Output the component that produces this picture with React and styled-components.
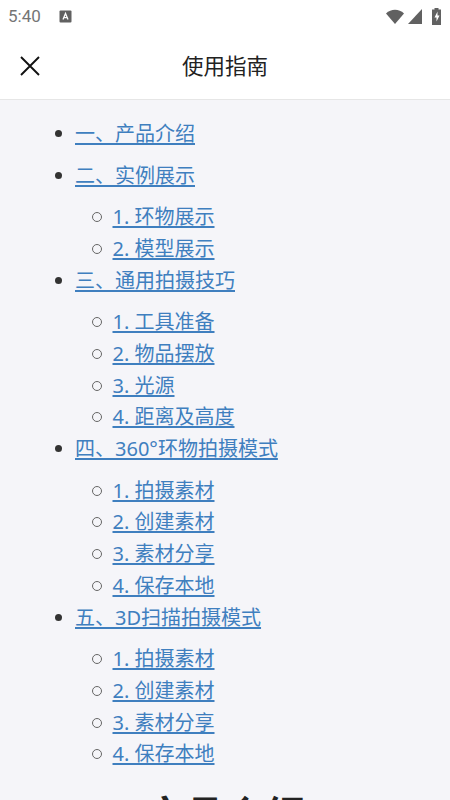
import { createGlobalStyle, styled } from "styled-components"

const GlobalStyle = createGlobalStyle`
    html, body {
        margin: 0;
        padding: 0;
        height: 100%;
        overflow: hidden;
    }

    body {
        font-family: "Noto Sans", "Open Sans", "Noto Sans CJK SC", sans-serif;
        background-color: #f5f5f9;
    }

    * {
        box-sizing: border-box;
    }
`;

const Page = styled.div`
    width: 450px;
    height: 800px;
    overflow: hidden;
    display: flex;
    flex-direction: column;
`;

const StatusBar = styled.div`
    height: 32px;
    background-color: white;
    display: flex;
    align-items: center;
    padding: 0 9px 0 8px;
    color: #757575;
`;

const Time = styled.span`
    font-family: Roboto, sans-serif;
    font-size: 17px;
    width: 51px;
`;

const StatusIcons = styled.div`
    margin-left: auto;
    display: flex;
    align-items: center;
    gap: 4px;
`;

const Battery = styled.svg`
    margin-left: 6px;
`;

const Header = styled.div`
    height: 68px;
    background-color: white;
    border-bottom: 1px solid #e6e6e6;
    display: flex;
    align-items: center;
    justify-content: center;
    padding-bottom: 3px;
    position: relative;
`;

const CloseIcon = styled.svg`
    position: absolute;
    left: 20px;
    top: 24px;
`;

const Title = styled.h1`
    margin: 0;
    font-family: "Noto Sans CJK SC", sans-serif;
    font-size: 21.5px;
    font-weight: 400;
    color: #222;
`;

const Content = styled.div`
    flex: 1;
    overflow: hidden;
    padding-top: 18px;
`;

const Sections = styled.ul`
    margin: 0;
    padding-left: 75px;
    list-style: none;
    font-size: 20px;
    line-height: 31.75px;
    color: #333;
`;

const Section = styled.li`
    position: relative;
    margin-bottom: 9.75px;

    &:has(ul) {
        margin-bottom: 0;
    }

    &::before {
        content: "";
        position: absolute;
        left: -20px;
        top: 12px;
        width: 7px;
        height: 7px;
        border-radius: 50%;
        background-color: #333;
    }
`;

const SubList = styled.ul`
    margin: 9.75px 0 0;
    padding-left: 37.5px;
    list-style: none;
`;

const SubItem = styled.li`
    position: relative;

    &::before {
        content: "";
        position: absolute;
        left: -20.5px;
        top: 11px;
        width: 8px;
        height: 8px;
        border-radius: 50%;
        border: 1.3px solid #666;
    }
`;

const Link = styled.a`
    color: #3f7fbf;
    text-decoration: underline;
    text-underline-offset: 2px;
    cursor: pointer;
`;

const Heading = styled.h2`
    margin: 15px 0 0;
    text-align: center;
    font-family: "Noto Sans CJK SC", sans-serif;
    font-size: 40px;
    line-height: 56px;
    font-weight: 700;
    color: #222;
`;

const sections = [
    { title: "一、产品介绍" },
    { title: "二、实例展示", items: ["1. 环物展示", "2. 模型展示"] },
    { title: "三、通用拍摄技巧", items: ["1. 工具准备", "2. 物品摆放", "3. 光源", "4. 距离及高度"] },
    { title: "四、360°环物拍摄模式", items: ["1. 拍摄素材", "2. 创建素材", "3. 素材分享", "4. 保存本地"] },
    { title: "五、3D扫描拍摄模式", items: ["1. 拍摄素材", "2. 创建素材", "3. 素材分享", "4. 保存本地"] },
];

const App = () => {
    return (
        <Page>
            <GlobalStyle />
            <StatusBar>
                <Time>5:40</Time>
                <svg width="13" height="13" viewBox="0 0 13 13">
                    <rect x="0.5" y="0.5" width="12" height="12" rx="1" fill="#616161" />
                    <path d="M4 9.5 6.5 3.5 9 9.5M5 7.6h3" stroke="#fff" strokeWidth="1.3" fill="none" />
                </svg>
                <StatusIcons>
                    <svg width="18" height="15" viewBox="0 0 18 15">
                        <path d="M0 4.500C5-.5 13-.5 18 4.500L9 15Z" fill="#616161" />
                    </svg>
                    <svg width="14" height="15" viewBox="0 0 14 15">
                        <path d="M0 15 14 0V15Z" fill="#616161" />
                    </svg>
                    <Battery width="9" height="17" viewBox="0 0 9 17">
                        <path d="M2.500 0h4v1.500H9V17H0V1.500h2.500Z" fill="#616161" />
                        <path d="M5.500 3.500 2.500 9.500h2v4l3-6h-2Z" fill="#fff" />
                    </Battery>
                </StatusIcons>
            </StatusBar>
            <Header>
                <CloseIcon width="20" height="20" viewBox="0 0 20 20">
                    <path d="M1 1 19 19M19 1 1 19" stroke="#111" strokeWidth="1.900" fill="none" />
                </CloseIcon>
                <Title>使用指南</Title>
            </Header>
            <Content>
                <Sections>
                    {sections.map((section) => (
                        <Section key={section.title}>
                            <Link>{section.title}</Link>
                            {section.items && (
                                <SubList>
                                    {section.items.map((item) => (
                                        <SubItem key={item}>
                                            <Link>{item}</Link>
                                        </SubItem>
                                    ))}
                                </SubList>
                            )}
                        </Section>
                    ))}
                </Sections>
                <Heading>产品介绍</Heading>
            </Content>
        </Page>
    )
}

export default App;
